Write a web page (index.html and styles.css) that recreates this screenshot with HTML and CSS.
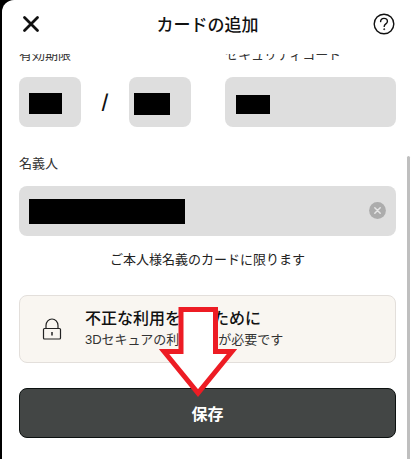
FILE: index.html
```html
<!DOCTYPE html>
<html lang="ja">
<head>
    <meta charset="UTF-8">
    <meta name="viewport" content="width=device-width, initial-scale=1.0">
    <title>カードの追加</title>
    <link rel="stylesheet" href="styles.css">
</head>
<body>
    <div class="sheet">
        <header class="header">
            <button class="icon-button" type="button" aria-label="閉じる">
                <svg width="24" height="24" viewBox="0 0 24 24"><path d="M5.5 5.5l13 13M18.5 5.5l-13 13" fill="none" stroke="#111" stroke-width="2.8" stroke-linecap="round"/></svg>
            </button>
            <h1 class="title">カードの追加</h1>
            <button class="icon-button" type="button" aria-label="ヘルプ">
                <svg width="24" height="24" viewBox="0 0 24 24" fill="none" stroke="#111" stroke-width="1.4"><circle cx="12" cy="12" r="9.8"/><path d="M8.6 9.6c.1-2 1.5-3.2 3.4-3.2s3.4 1.2 3.4 3c0 2.4-3.2 2.5-3.2 5" stroke-linecap="round"/><circle cx="12.2" cy="17.2" r=".6" fill="#111" stroke-width=".6"/></svg>
            </button>
        </header>

        <form class="content">
            <div class="row">
                <div class="group">
                    <label class="label" for="month">有効期限</label>
                    <div class="expiry">
                        <div class="field">
                            <input class="input" id="month" type="text">
                            <span class="mask mask-month"></span>
                        </div>
                        <span class="slash">/</span>
                        <div class="field">
                            <input class="input" id="year" type="text" aria-label="年">
                            <span class="mask mask-year"></span>
                        </div>
                    </div>
                </div>
                <div class="group security">
                    <label class="label" for="code">セキュリティコード</label>
                    <div class="field">
                        <input class="input" id="code" type="text">
                        <span class="mask mask-code"></span>
                    </div>
                </div>
            </div>

            <div class="group holder">
                <label class="label" for="name">名義人</label>
                <div class="field">
                    <input class="input" id="name" type="text">
                    <span class="mask mask-name"></span>
                    <button class="clear" type="button" aria-label="消去">
                        <svg width="17" height="17" viewBox="0 0 17 17"><circle cx="8.5" cy="8.5" r="8.4" fill="#acacac"/><path d="M5.8 5.8l5.4 5.4M11.2 5.8l-5.4 5.4" stroke="#e6e6e6" stroke-width="1.5" stroke-linecap="round"/></svg>
                    </button>
                </div>
            </div>
            <p class="note">ご本人様名義のカードに限ります</p>

            <section class="notice">
                <svg class="lock" width="20" height="22" viewBox="0 0 20 22" fill="none" stroke="#222" stroke-width="1.2"><rect x="1.5" y="10.5" width="17" height="10.5" rx="1"/><path d="M4 10.5V7.5a6 6.5 0 0 1 12 0v3"/><path d="M10 14v3.5" stroke-width="1.5"/></svg>
                <div>
                    <h2 class="notice-title">不正な利用を防ぐために</h2>
                    <p class="notice-text">3Dセキュアの利用設定が必要です</p>
                </div>
            </section>

            <button class="save" type="submit">保存</button>
        </form>

        <div class="scrollbar"></div>

        <!-- Arrow pointing at the save button -->
        <svg class="arrow" width="78" height="92" viewBox="0 0 78 92"><path d="M22 4.5h34.5v42h16.5L39 88 5 46.5h17z" fill="#fff" stroke="#ed1c24" stroke-width="5"/></svg>
    </div>
</body>
</html>
```
FILE: styles.css
```css
* {
    box-sizing: border-box;
}
body {
    margin: 0;
    background-color: #000;
    color: #111;
    font-family: "Liberation Sans", "Noto Sans CJK JP", sans-serif;
    font-size: 13px;
}
h1, h2, p {
    margin: 0;
}
button {
    padding: 0;
    border: none;
    font-family: inherit;
    cursor: pointer;
}
.sheet {
    position: relative;
    min-height: 100vh;
    margin-left: 2px;
    background-color: #fff;
    border-top-left-radius: 12px;
}
.header {
    display: flex;
    align-items: center;
    justify-content: space-between;
    height: 54px;
    padding: 0 15px 6px 17px;
}
.icon-button {
    width: 24px;
    height: 24px;
    background: none;
}
.icon-button svg {
    display: block;
}
.title {
    padding-top: 4px;
    font-size: 17px;
    font-weight: 500;
    line-height: 24px;
}

/* The form is scrolled, its first labels go under the header */
.content {
    overflow: hidden;
    padding: 0 15px 20px 17px;
}
.row {
    display: flex;
    gap: 34px;
    margin-top: -10px;
}
.group {
    display: flex;
    flex-direction: column;
    gap: 11px;
}
.security {
    flex: 1;
}
.holder {
    margin-top: 26px;
}
.label {
    line-height: 22px;
    color: #333;
}
.expiry {
    display: flex;
    align-items: center;
}
.expiry .field {
    width: 62px;
}
.slash {
    width: 48px;
    text-align: center;
    font-family: Inter, sans-serif;
    font-size: 20px;
    font-weight: 500;
    line-height: 50px;
}
.field {
    position: relative;
}
.input {
    display: block;
    width: 100%;
    height: 50px;
    padding: 0 10px;
    border: none;
    border-radius: 8px;
    background-color: #dedede;
    font-size: 16px;
}

/* Blacked-out values */
.mask {
    position: absolute;
    background-color: #000;
}
.mask-month {
    top: 16px;
    left: 10px;
    width: 33px;
    height: 21px;
}
.mask-year {
    top: 16px;
    left: 5px;
    width: 36px;
    height: 22px;
}
.mask-code {
    top: 18px;
    left: 11px;
    width: 34px;
    height: 19px;
}
.mask-name {
    top: 13px;
    left: 10px;
    width: 156px;
    height: 25px;
}
.clear {
    position: absolute;
    top: 16px;
    right: 10px;
    width: 17px;
    height: 17px;
    background: none;
}
.clear svg {
    display: block;
}
.note {
    margin-top: 13px;
    text-align: center;
    line-height: 22px;
    color: #222;
}
.notice {
    display: flex;
    align-items: center;
    gap: 23px;
    height: 68px;
    margin-top: 24px;
    padding: 0 22px;
    border: 1px solid #e3dfdb;
    border-radius: 8px;
    background-color: #f9f6f1;
}
.notice-title {
    font-size: 16px;
    font-weight: 500;
    line-height: 22px;
}
.notice-text {
    line-height: 20px;
    color: #333;
}
.save {
    display: block;
    width: 100%;
    height: 50px;
    margin-top: 25px;
    border: 1px solid #0c1110;
    border-radius: 8px;
    background-color: #434645;
    color: #fff;
    font-size: 16px;
    font-weight: 700;
}
.scrollbar {
    position: absolute;
    top: 156px;
    right: 1px;
    bottom: 0;
    width: 3px;
    border-radius: 2px 2px 0 0;
    background-color: #bfbfbf;
}
.arrow {
    position: absolute;
    top: 305px;
    left: 157px;
}
```
